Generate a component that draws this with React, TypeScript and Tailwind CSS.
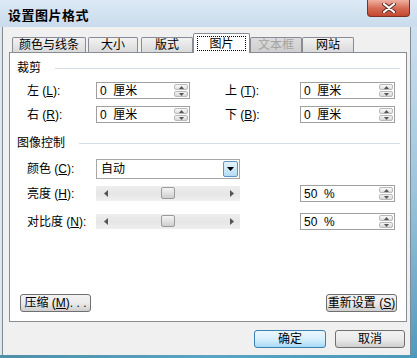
import React from "react";

const F = "font-['Liberation_Sans','Noto_Sans_CJK_SC',sans-serif]";

function UpDown() {
  return (
    <div className="flex flex-col w-[15px] h-full py-px pr-px gap-px">
      <div className="flex-1 flex items-center justify-center bg-gradient-to-b from-[#fbfbfb] to-[#dedede] border border-[#b9b9b9] rounded-[2px]">
        <svg width="5" height="3" viewBox="0 0 5 3"><path d="M0 3 L2.5 0 L5 3Z" fill="#555" /></svg>
      </div>
      <div className="flex-1 flex items-center justify-center bg-gradient-to-b from-[#f3f3f3] to-[#d8d8d8] border border-[#b9b9b9] rounded-[2px]">
        <svg width="5" height="3" viewBox="0 0 5 3"><path d="M0 0 L2.5 3 L5 0Z" fill="#555" /></svg>
      </div>
    </div>
  );
}

function Spin({ value, w }: { value: string; w: string }) {
  return (
    <div className={`flex items-stretch h-[17px] ${w} border border-[#a0a0a0] bg-white`}>
      <div className="flex-1 flex items-center pl-[3px] text-[12px] leading-none text-black whitespace-pre">{value}</div>
      <UpDown />
    </div>
  );
}

function Label({ text, k, w }: { text: string; k: string; w: string }) {
  return (
    <div className={`${w} text-[12px] leading-none text-black whitespace-pre`}>
      {text} (<span className="underline">{k}</span>):
    </div>
  );
}

function Header({ text }: { text: string }) {
  return (
    <div className="flex items-center h-[16px] pl-[7px] mr-[6px]">
      <span className="text-[12px] leading-none text-black">{text}</span>
      <div className="flex-1 h-px bg-[#d5dfe5] ml-[14px]" />
    </div>
  );
}

function Slider() {
  return (
    <div className="relative w-[144px] h-[15px] bg-gradient-to-b from-[#eeeeee] via-[#e6e6e6] to-[#efefef] flex items-center">
      <svg className="absolute left-[8px] top-[4px]" width="4" height="7" viewBox="0 0 4 7"><path d="M4 0 L0 3.5 L4 7Z" fill="#555" /></svg>
      <svg className="absolute right-[6px] top-[4px]" width="4" height="7" viewBox="0 0 4 7"><path d="M0 0 L4 3.5 L0 7Z" fill="#555" /></svg>
      <div className="absolute left-[65px] top-[1px] w-[14px] h-[12px] rounded-[2px] border border-[#9a9a9a] bg-gradient-to-b from-[#f4f4f4] to-[#cfcfcf]" />
    </div>
  );
}

function Btn({ children, w, def }: { children: React.ReactNode; w: string; def?: boolean }) {
  return (
    <div
      className={`${w} h-[18px] flex items-center justify-center rounded-[3px] border text-[12px] leading-none text-black whitespace-pre ${
        def
          ? "border-[#3c7fb1] bg-gradient-to-b from-[#eaf6fd] via-[#d9f0fc] to-[#a7d9f5]"
          : "border-[#707070] bg-gradient-to-b from-[#f2f2f2] via-[#ebebeb] to-[#cfcfcf]"
      }`}
    >
      {children}
    </div>
  );
}

function Tab({ label, w, ml, disabled }: { label: string; w: string; ml?: string; disabled?: boolean }) {
  return (
    <div
      className={`${w} ${ml ?? ""} h-[15px] flex items-center justify-center border border-b-0 border-[#898c95] rounded-t-[2px] text-[12px] leading-none ${
        disabled
          ? "bg-gradient-to-b from-[#dcdcdc] to-[#cfcfcf] text-[#a3a3a3]"
          : "bg-gradient-to-b from-[#f2f2f2] to-[#dadada] text-black"
      }`}
    >
      {label}
    </div>
  );
}

export default function App() {
  return (
    <div className={`w-[417px] h-[358px] overflow-hidden flex flex-col bg-[#c8dbeb] ${F}`}>
      {/* Title bar */}
      <div className="h-[27px] flex items-start bg-gradient-to-b from-[#dde9f5] to-[#c9dbec]">
        <div className="flex-1 h-full flex items-center pl-[8px] pt-[3px]">
          <span className="text-[13px] font-bold leading-none text-black tracking-[0.5px]">设置图片格式</span>
        </div>
        <div className="mr-[7px] w-[43px] h-[17px] rounded-b-[4px] border border-t-0 border-[#7a3226] bg-gradient-to-b from-[#eeb0a2] via-[#d66d57] to-[#c4472f] flex items-center justify-center">
          <svg width="14" height="10" viewBox="0 0 14 10">
            <path d="M2 1 L12 9 M12 1 L2 9" stroke="#5a2a22" strokeWidth="4" strokeLinecap="round" />
            <path d="M2 1 L12 9 M12 1 L2 9" stroke="#ffffff" strokeWidth="2.2" strokeLinecap="round" />
          </svg>
        </div>
      </div>

      {/* Body */}
      <div className="flex h-[328px]">
        <div className="w-[3px] bg-gradient-to-r from-[#e3ebf2] via-[#d8e3ec] to-[#5f6468]" />
        <div className="w-[407px] bg-[#f0f0f0] flex flex-col">
          {/* Tabs */}
          <div className="mt-[6px] ml-[9px] h-[19px] flex items-end relative z-10">
            <Tab label="颜色与线条" w="w-[74px]" />
            <Tab label="大小" w="w-[50px]" ml="ml-[2px]" />
            <Tab label="版式" w="w-[52px]" ml="ml-[3px]" />
            <div className="w-[57px] h-[20px] -mb-px bg-white border border-b-0 border-[#898c95] rounded-t-[2px] flex items-center justify-center">
              <div className="w-[49px] h-[15px] border border-dotted border-black flex items-center justify-center text-[12px] leading-none text-black">
                图片
              </div>
            </div>
            <Tab label="文本框" w="w-[52px]" disabled />
            <Tab label="网站" w="w-[52px]" />
          </div>

          {/* Panel */}
          <div className="ml-[6px] w-[398px] h-[270px] border border-[#898c95] bg-white flex flex-col">
            <div className="mt-[7px]">
              <Header text="裁剪" />
            </div>
            <div className="mt-[6px] h-[17px] flex items-center pl-[17px]">
              <Label text="左" k="L" w="w-[69px]" />
              <Spin value={"0  厘米"} w="w-[94px]" />
              <div className="w-[35px]" />
              <Label text="上" k="T" w="w-[75px]" />
              <Spin value={"0  厘米"} w="w-[95px]" />
            </div>
            <div className="mt-[7px] h-[17px] flex items-center pl-[17px]">
              <Label text="右" k="R" w="w-[69px]" />
              <Spin value={"0  厘米"} w="w-[94px]" />
              <div className="w-[35px]" />
              <Label text="下" k="B" w="w-[75px]" />
              <Spin value={"0  厘米"} w="w-[95px]" />
            </div>
            <div className="mt-[12px]">
              <Header text="图像控制" />
            </div>
            <div className="mt-[8px] h-[20px] flex items-center pl-[17px]">
              <Label text="颜色" k="C" w="w-[69px]" />
              <div className="w-[144px] h-[20px] border border-[#a6a6a6] bg-white flex items-stretch">
                <div className="flex-1 flex items-center pl-[4px] text-[12px] leading-none text-black">自动</div>
                <div className="w-[15px] m-px border border-[#5f93c2] rounded-[2px] bg-gradient-to-b from-[#e4f3fc] to-[#b5dcf4] flex items-center justify-center">
                  <svg width="7" height="4" viewBox="0 0 7 4"><path d="M0 0 L7 0 L3.5 4Z" fill="#000" /></svg>
                </div>
              </div>
            </div>
            <div className="mt-[6px] h-[17px] flex items-center pl-[17px]">
              <Label text="亮度" k="H" w="w-[69px]" />
              <Slider />
              <div className="w-[60px]" />
              <Spin value={"50  %"} w="w-[95px]" />
            </div>
            <div className="mt-[11px] h-[17px] flex items-center pl-[17px]">
              <Label text="对比度" k="N" w="w-[69px]" />
              <Slider />
              <div className="w-[60px]" />
              <Spin value={"50  %"} w="w-[95px]" />
            </div>
            <div className="flex-1" />
            <div className="mb-[10px] h-[17px] flex items-center pl-[10px] pr-[9px] justify-between">
              <Btn w="w-[71px]">
                压缩 (<span className="underline">M</span>). . .
              </Btn>
              <Btn w="w-[71px]">
                重新设置 (<span className="underline">S</span>)
              </Btn>
            </div>
          </div>

          {/* Dialog buttons */}
          <div className="mt-[8px] h-[18px] flex justify-end gap-[9px] pr-[5px]">
            <Btn w="w-[72px]" def>
              确定
            </Btn>
            <Btn w="w-[70px]">取消</Btn>
          </div>
        </div>
        <div className="w-[1px] bg-[#7a8c98]" />
        <div className="flex-1 bg-gradient-to-b from-[#cfe0ee] via-[#9cc4dc] to-[#4f9bbb]" />
      </div>
      <div className="flex-1 bg-gradient-to-r from-[#4f8fa8] via-[#5aa3c2] to-[#4c97b6]" />
    </div>
  );
}
